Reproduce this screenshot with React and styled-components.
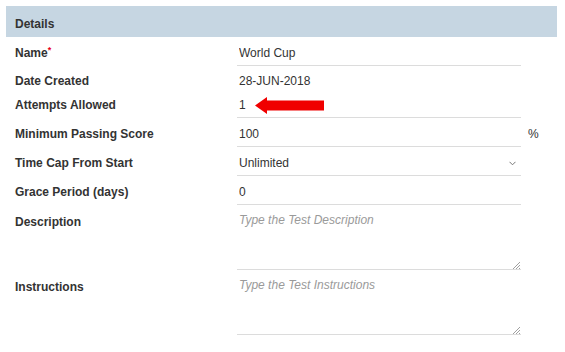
import React from 'react'
import styled, { createGlobalStyle } from 'styled-components'

const GlobalStyle = createGlobalStyle`
  html, body {
    margin: 0;
    padding: 0;
    background: #fff;
    font-family: "Liberation Sans", Arial, sans-serif;
    color: #333;
  }
`

const Panel = styled.div`
  margin: 6px 8px 0 6px;
  width: 551px;
`
const Header = styled.div`
  height: 31px;
  display: flex;
  align-items: center;
  padding: 4px 9px 0;
  box-sizing: border-box;
  background: #c6d6e2;
  font-size: 12px;
  font-weight: bold;
  color: #333;
`
const Body = styled.div`
  display: flex;
  flex-direction: column;
`
const Row = styled.div`
  display: flex;
  align-items: ${props => (props.top ? 'flex-start' : 'baseline')};
`
const Label = styled.div`
  width: 222px;
  padding-left: 9px;
  box-sizing: border-box;
  font-size: 12px;
  font-weight: bold;
  color: #333;
  padding-top: ${props => (props.top ? '10px' : '0')};
`
const Required = styled.span`
  color: #e8001c;
  font-size: 9px;
  vertical-align: top;
  position: relative;
  top: -1px;
`
const Field = styled.div`
  width: 284px;
  margin-left: 9px;
  position: relative;
`
const Input = styled.input`
  display: block;
  width: 100%;
  height: 29px;
  box-sizing: border-box;
  border: none;
  border-bottom: 1px solid #dcdcdc;
  padding: 4px 2px 0;
  font-family: inherit;
  font-size: 12px;
  color: #333;
  outline: none;
  background: transparent;
`
const Static = styled.div`
  height: 23px;
  padding: 8px 2px 0;
  box-sizing: border-box;
  font-size: 12px;
  color: #333;
  line-height: 15px;
`
const Select = styled.div`
  height: 29px;
  box-sizing: border-box;
  border-bottom: 1px solid #dcdcdc;
  padding: 4px 5px 0 2px;
  display: flex;
  align-items: center;
  justify-content: space-between;
  font-size: 12px;
  color: #333;
`
const TextArea = styled.textarea`
  display: block;
  width: 100%;
  height: 65px;
  box-sizing: border-box;
  border: none;
  border-bottom: 1px solid #dcdcdc;
  padding: 8px 2px 0;
  font-family: inherit;
  font-size: 12px;
  line-height: 14px;
  resize: none;
  outline: none;
  background: transparent;
  &::placeholder {
    color: #9a9a9a;
    font-style: italic;
  }
`
const Grip = styled.svg`
  position: absolute;
  right: 0;
  bottom: 1px;
`
const Unit = styled.div`
  margin-left: 7px;
  font-size: 12px;
  color: #333;
`
const Arrow = styled.svg`
  position: absolute;
  left: 18px;
  top: 8px;
`

const ResizeGrip = () => (
  <Grip width="10" height="8" viewBox="0 0 10 8">
    <path d="M2 8 L9 1 M5 8 L9 4 M8 8 L9 7" stroke="#a0a0a0" strokeWidth="1" fill="none" />
  </Grip>
)

export default function App() {
  return (
    <>
      <GlobalStyle />
      <Panel>
        <Header>Details</Header>
        <Body>
          <Row>
            <Label>Name<Required>*</Required></Label>
            <Field><Input defaultValue="World Cup" /></Field>
          </Row>
          <Row>
            <Label>Date Created</Label>
            <Field><Static>28-JUN-2018</Static></Field>
          </Row>
          <Row>
            <Label>Attempts Allowed</Label>
            <Field>
              <Input defaultValue="1" />
              <Arrow width="70" height="18" viewBox="0 0 70 18">
                <path d="M0 8.5 L12 0 L12 3.5 L69 3.5 L69 13.5 L12 13.5 L12 17 Z" fill="#f00000" />
              </Arrow>
            </Field>
          </Row>
          <Row>
            <Label>Minimum Passing Score</Label>
            <Field><Input defaultValue="100" /></Field>
            <Unit>%</Unit>
          </Row>
          <Row>
            <Label>Time Cap From Start</Label>
            <Field>
              <Select>
                <span>Unlimited</span>
                <svg width="7" height="5" viewBox="0 0 7 5">
                  <path d="M0.5 0.8 L3.5 3.8 L6.5 0.8" stroke="#777" strokeWidth="1" fill="none" />
                </svg>
              </Select>
            </Field>
          </Row>
          <Row>
            <Label>Grace Period (days)</Label>
            <Field><Input defaultValue="0" /></Field>
          </Row>
          <Row top>
            <Label top>Description</Label>
            <Field>
              <TextArea placeholder="Type the Test Description" />
              <ResizeGrip />
            </Field>
          </Row>
          <Row top>
            <Label top>Instructions</Label>
            <Field>
              <TextArea placeholder="Type the Test Instructions" />
              <ResizeGrip />
            </Field>
          </Row>
        </Body>
      </Panel>
    </>
  )
}
